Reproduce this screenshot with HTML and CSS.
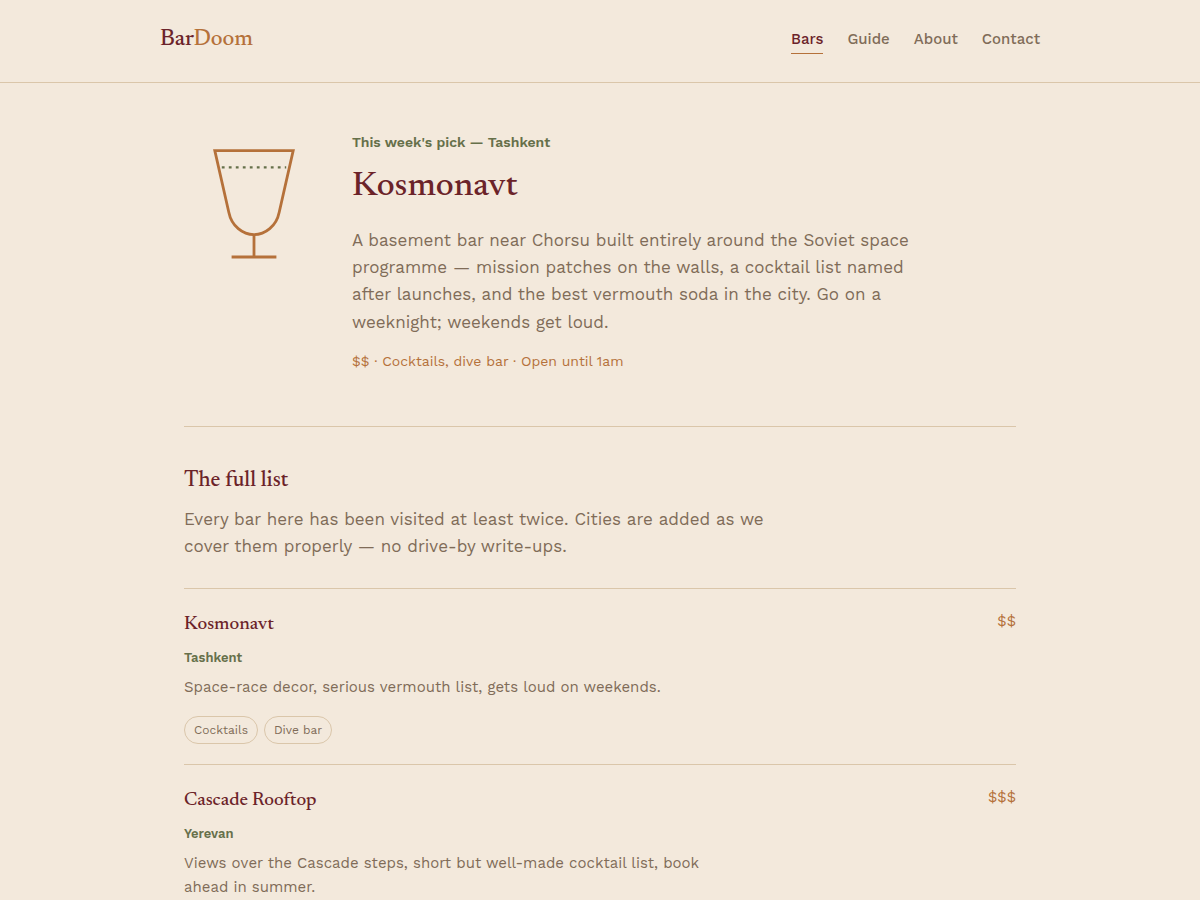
FILE: index.html
```html
<!DOCTYPE html>
<html lang="en">
<head>
<meta charset="utf-8">
<meta name="viewport" content="width=device-width, initial-scale=1">
<title>BarDoom</title>
<link rel="stylesheet" href="styles.css">
</head>
<body>
<header class="site-header">
  <div class="header-inner">
    <a class="logo" href="#">Bar<span class="logo-accent">Doom</span></a>
    <nav class="nav" aria-label="Main">
      <a class="nav-link active" href="#" aria-current="page">Bars</a>
      <a class="nav-link" href="#">Guide</a>
      <a class="nav-link" href="#">About</a>
      <a class="nav-link" href="#">Contact</a>
    </nav>
  </div>
</header>
<main class="main">
  <section class="feature">
    <svg class="glass" viewBox="0 0 100 100" fill="none" stroke-width="2" aria-hidden="true">
      <path class="glass-line" d="M22 14H78L68 58C66 68 58 74 50 74C42 74 34 68 32 58Z"/>
      <path class="glass-line" d="M50 74V90M34 90H66"/>
      <path class="glass-fill" d="M27 26H73" stroke-width="1.5" stroke-dasharray="2 3"/>
    </svg>
    <div class="feature-body">
      <p class="eyebrow">This week's pick — Tashkent</p>
      <h1 class="feature-title">Kosmonavt</h1>
      <p class="feature-text">A basement bar near Chorsu built entirely around the Soviet space programme — mission patches on the walls, a cocktail list named after launches, and the best vermouth soda in the city. Go on a weeknight; weekends get loud.</p>
      <p class="feature-meta">$$ · Cocktails, dive bar · Open until 1am</p>
    </div>
  </section>
  <section class="list">
    <h2 class="list-title">The full list</h2>
    <p class="list-intro">Every bar here has been visited at least twice. Cities are added as we cover them properly — no drive-by write-ups.</p>
    <article class="bar">
      <div class="bar-body">
        <h3 class="bar-name">Kosmonavt</h3>
        <p class="bar-city">Tashkent</p>
        <p class="bar-text">Space-race decor, serious vermouth list, gets loud on weekends.</p>
        <ul class="tags"><li class="tag">Cocktails</li><li class="tag">Dive bar</li></ul>
      </div>
      <span class="price">$$</span>
    </article>
    <article class="bar">
      <div class="bar-body">
        <h3 class="bar-name">Cascade Rooftop</h3>
        <p class="bar-city">Yerevan</p>
        <p class="bar-text">Views over the Cascade steps, short but well-made cocktail list, book ahead in summer.</p>
      </div>
      <span class="price">$$$</span>
    </article>
  </section>
</main>
</body>
</html>
```
FILE: styles.css
```css
:root {
  --paper: #f3e9dc;
  --wine: #6b2329;
  --copper: #b5713a;
  --olive: #66704a;
  --text: #806c58;
  --line: #dac6aa;
}
* { box-sizing: border-box; margin: 0; padding: 0; }
body {
  background: var(--paper);
  color: var(--text);
  font-family: "Work Sans", Inter, sans-serif;
  font-size: 17px;
  font-weight: 400;
  line-height: 1.6;
}
h1, h2, h3, .logo {
  font-family: Newsreader, "Liberation Serif", serif;
  font-weight: 500;
  color: var(--wine);
}
a { text-decoration: none; }
.site-header { border-bottom: 1px solid var(--line); }
.header-inner {
  max-width: 880px;
  margin: 0 auto;
  padding: 25px 0 27px;
  display: flex;
  justify-content: space-between;
  align-items: center;
}
.logo { font-size: 23px; line-height: 30px; }
.logo-accent { color: var(--copper); }
.nav { display: flex; gap: 24px; }
.nav-link {
  color: var(--text);
  font-size: 15px;
  line-height: 24px;
  font-weight: 500;
  padding-bottom: 2px;
  border-bottom: 1px solid transparent;
}
.nav-link.active { color: var(--wine); border-color: var(--copper); }
.main { max-width: 880px; margin: 0 auto; padding: 48px 24px; }
.feature {
  display: grid;
  grid-template-columns: 140px 1fr;
  gap: 28px;
  padding-bottom: 54px;
  border-bottom: 1px solid var(--line);
}
.glass { width: 100%; }
.glass-line { stroke: var(--copper); }
.glass-fill { stroke: var(--olive); }
.eyebrow, .bar-city {
  color: var(--olive);
  font-weight: 600;
  line-height: 22px;
}
.eyebrow { font-size: 14px; }
.feature-title { font-size: 35px; line-height: 44px; margin: 12px 0 18px; }
.feature-text { max-width: 560px; }
.feature-meta { color: var(--copper); font-size: 14px; line-height: 22px; margin-top: 14px; }
.list { padding-top: 38px; }
.list-title { font-size: 22px; line-height: 32px; margin-bottom: 9px; }
.list-intro { max-width: 600px; margin-bottom: 28px; }
.bar {
  display: flex;
  justify-content: space-between;
  border-top: 1px solid var(--line);
  padding: 20px 0;
}
.bar-name { font-size: 19px; line-height: 32px; margin-bottom: 6px; }
.bar-city { font-size: 13px; }
.bar-text { font-size: 15px; line-height: 24px; max-width: 520px; margin-top: 6px; }
.tags { display: flex; gap: 6px; list-style: none; margin-top: 17px; }
.tag {
  font-size: 12px;
  line-height: 20px;
  padding: 3px 9px;
  border: 1px solid var(--line);
  border-radius: 14px;
}
.price { color: var(--copper); font-size: 15px; line-height: 24px; }
```
